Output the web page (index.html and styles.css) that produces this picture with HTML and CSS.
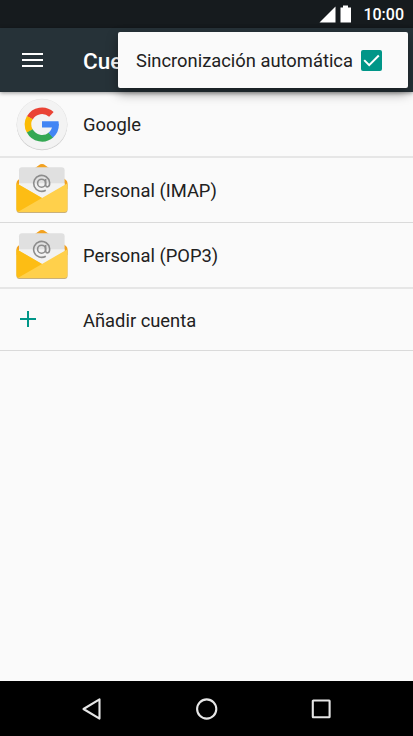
FILE: index.html
```html
<!DOCTYPE html>
<html lang="es">
<head>
    <meta charset="UTF-8">
    <meta name="viewport" content="width=device-width, initial-scale=1.0">
    <title>Cuentas</title>
    <link rel="stylesheet" href="styles.css">
</head>
<body>
    <!-- icono de correo, usado en las cuentas IMAP y POP3 -->
    <svg class="sprite" width="0" height="0">
        <symbol id="mail" viewBox="0 0 54 54">
            <path d="M1.5 20Q1.5 18.4 3 17L23.5 2.4Q27 -0.4 30.5 2.4L51 17Q52.5 18.4 52.5 20V26H1.5Z" fill="#f2a11f"/>
            <path d="M4 24V7.3Q4 4.3 7 4.3H46.6Q49.6 4.3 49.6 7.3V24L27 37Z" fill="#e0e0e0"/>
            <path d="M4 20.2H49.6V24L27 37L4 24Z" fill="#f2f2f2"/>
            <g fill="none" stroke="#8c8c8c" stroke-width="1.6">
                <circle cx="26.6" cy="20.2" r="4"/>
                <path d="M30.6 16V21.5Q30.8 24.2 32.8 23.8Q34.8 23.4 34.6 19.5A8 8 0 1 0 30.8 27.2"/>
            </g>
            <path d="M1.5 21L27 36L52.5 21V47Q52.5 50 49.5 50H4.5Q1.5 50 1.5 47Z" fill="#c9b07a"/>
            <path d="M1.5 20.2L27 35L52.5 20.2V46Q52.5 49 49.5 49H4.5Q1.5 49 1.5 46Z" fill="#ffd04b"/>
            <path d="M1.5 20.2L27 35L3.2 48.7Q1.5 48.1 1.5 46Z" fill="#fdbd14"/>
        </symbol>
    </svg>

    <div class="screen">
        <div class="status-bar">
            <div class="status-icons">
                <svg width="34" height="18" viewBox="0 0 34 18">
                    <path d="M0.5 17.5L16.5 1.5V17.5Z" fill="#fff"/>
                    <path d="M21.5 2.5H24V0.5H29V2.5H32V17.5H21.5Z" fill="#fff"/>
                </svg>
            </div>
            <span class="clock">10:00</span>
        </div>

        <header class="toolbar">
            <button class="menu-button" aria-label="Menú">
                <svg width="22" height="16" viewBox="0 0 22 16">
                    <path d="M1 2H22M1 8H22M1 14H22" stroke="#fff" stroke-width="2"/>
                </svg>
            </button>
            <h1>Cuentas</h1>
            <label class="popup">
                <span>Sincronización automática</span>
                <svg width="21" height="21" viewBox="0 0 21 21">
                    <rect width="21" height="21" rx="2" fill="#009688"/>
                    <path d="M3.2 10.1L8.2 15.1L17.8 5.5" fill="none" stroke="#fff" stroke-width="2"/>
                </svg>
            </label>
        </header>

        <ul class="account-list">
            <li class="account google">
                <div class="icon">
                    <svg width="54" height="54" viewBox="0 0 54 54">
                        <circle cx="27" cy="28" r="25.3" fill="#cacaca"/>
                        <circle cx="27" cy="27.2" r="25.4" fill="#e4e4e4"/>
                        <circle cx="27" cy="27.2" r="25" fill="#f3f3f3"/>
                        <g fill="none" stroke-width="6.6">
                            <path d="M14.8 20.9A13.9 13.9 0 0 1 36.4 17.4" stroke="#ea4335"/>
                            <path d="M14.8 34.1A13.9 13.9 0 0 1 14.8 20.5" stroke="#fbbc05"/>
                            <path d="M14.8 33.9A13.9 13.9 0 0 0 36.1 38" stroke="#34a853"/>
                            <path d="M35.7 38.2A13.9 13.9 0 0 0 40.6 27.4" stroke="#4285f4"/>
                        </g>
                        <path d="M27 24.2H43.5L43.8 27.4L42.5 30.6H27Z" fill="#4285f4"/>
                    </svg>
                </div>
                <span class="name">Google</span>
            </li>
            <li class="account imap">
                <div class="icon">
                    <svg width="54" height="54"><use href="#mail"/></svg>
                </div>
                <span class="name">Personal (IMAP)</span>
            </li>
            <li class="account pop">
                <div class="icon">
                    <svg width="54" height="54"><use href="#mail"/></svg>
                </div>
                <span class="name">Personal (POP3)</span>
            </li>
            <li class="account add">
                <div class="icon">
                    <svg width="16" height="16" viewBox="0 0 16 16">
                        <path d="M8 0V16M0 8H16" stroke="#009688" stroke-width="2"/>
                    </svg>
                </div>
                <span class="name">Añadir cuenta</span>
            </li>
        </ul>

        <nav class="nav-bar">
            <svg width="22" height="24" viewBox="0 0 22 24">
                <path d="M2.5 12L18.5 2.4V21.6Z"/>
            </svg>
            <svg width="24" height="24" viewBox="0 0 24 24">
                <circle cx="11.7" cy="12" r="9.6"/>
            </svg>
            <svg width="22" height="24" viewBox="0 0 22 24">
                <rect x="2.8" y="3.5" width="16.8" height="16.8" rx="0.5"/>
            </svg>
        </nav>
    </div>
</body>
</html>
```
FILE: styles.css
```css
body {
    margin: 0;
    font-family: Roboto, 'Liberation Sans', sans-serif;
    background-color: #fafafa;
    color: #212121;
}

svg {
    display: block;
}

.screen {
    display: flex;
    flex-direction: column;
    height: 736px;
    overflow: hidden;
}

.status-bar {
    display: flex;
    justify-content: flex-end;
    align-items: center;
    height: 28px;
    padding-right: 9px;
    background-color: #161b1e;
    color: #fff;
}

.status-icons {
    margin-right: 10px;
}

.clock {
    padding-top: 1px;
    font-size: 16px;
    font-weight: 500;
}

.toolbar {
    position: relative;
    display: flex;
    align-items: center;
    height: 64px;
    padding-left: 21px;
    background-color: #263238;
    box-shadow: 0 1px 4px rgba(0, 0, 0, 0.4);
}

.menu-button {
    width: 62px;
    padding: 0;
    border: none;
    background: none;
}

.toolbar h1 {
    width: 35px;
    margin: 2px 0 0;
    overflow: hidden;
    color: #fff;
    font-size: 22.5px;
    font-weight: 500;
}

/* menú desplegable sobre la barra */
.popup {
    position: absolute;
    top: 4px;
    right: 5px;
    display: flex;
    align-items: center;
    justify-content: space-between;
    box-sizing: border-box;
    width: 290px;
    height: 56px;
    padding: 0 26px 0 18px;
    border-radius: 2px;
    background-color: #fafafa;
    box-shadow: 0 5px 12px rgba(0, 0, 0, 0.4);
    font-size: 18.35px;
    white-space: nowrap;
}

.popup span {
    padding-top: 1px;
}

.account-list {
    flex: 1;
    margin: 0;
    padding: 0;
    list-style: none;
}

.account {
    display: flex;
    align-items: center;
    box-sizing: border-box;
    height: 66px;
    padding-left: 15px;
    border-bottom: 2px solid #e6e6e6;
}

.account.imap {
    height: 65px;
    border-bottom: 1px solid #dadada;
}

.account.add {
    height: 62px;
    padding-left: 20px;
    border-bottom: 1px solid #dadada;
}

.icon {
    width: 68px;
}

.pop .icon {
    padding-top: 2px;
}

.add .icon {
    width: 63px;
    padding-bottom: 1px;
}

.name {
    padding-top: 1px;
    font-size: 18.35px;
}

.nav-bar {
    display: flex;
    justify-content: space-between;
    align-items: center;
    height: 55px;
    padding: 0 81px;
    background-color: #000;
}

.nav-bar svg {
    fill: none;
    stroke: #e6e6e6;
    stroke-width: 2.1;
    stroke-linejoin: round;
}
```
